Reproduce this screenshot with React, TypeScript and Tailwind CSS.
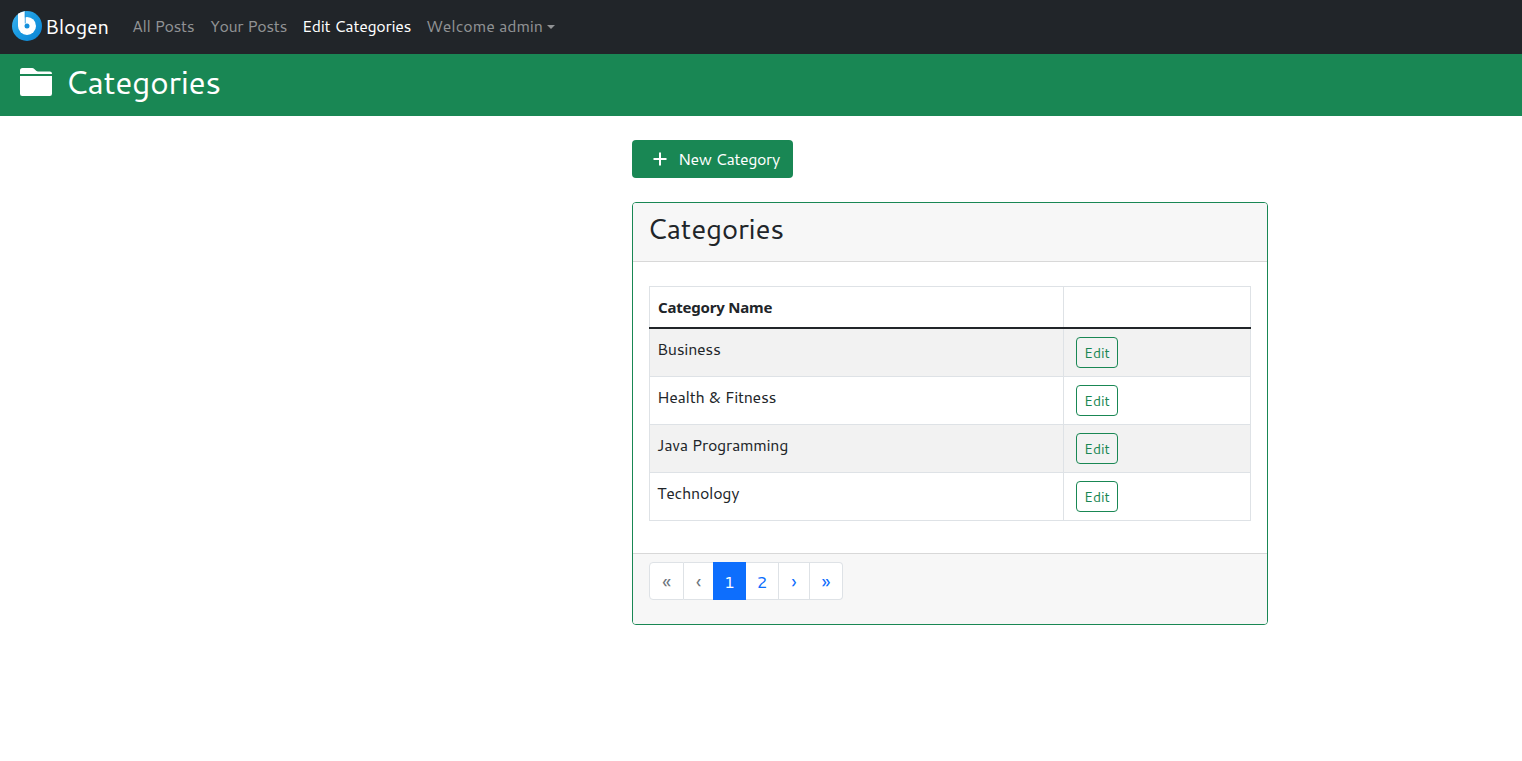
import React from "react";

const categories = ["Business", "Health & Fitness", "Java Programming", "Technology"];

function Logo() {
  return (
    <svg width="30" height="30" viewBox="0 0 30 30" className="-mt-px shrink-0">
      <defs>
        <linearGradient id="disc" x1="0" y1="0" x2="1" y2="1">
          <stop offset="0" stopColor="#45b5ee" />
          <stop offset="0.45" stopColor="#1a9be2" />
          <stop offset="1" stopColor="#0b83d3" />
        </linearGradient>
      </defs>
      <circle cx="15" cy="15" r="15" fill="url(#disc)" />
      <path fill="#fff" d="M6 2.8Q9 .7 12.8 .2V15H6Z" />
      <circle cx="15" cy="14.9" r="9" fill="#fff" />
      <path fill="#1490dc" d="M12.8 1H13.6V12.6H12.8Z" />
      <circle cx="15" cy="14.9" r="2.5" fill="#1490dc" />
    </svg>
  );
}

function FolderIcon() {
  return (
    <svg width="32" height="32" viewBox="0 0 32 32" fill="#fff" className="shrink-0">
      <path d="M0 8V4.5A2.5 2.5 0 0 1 2.5 2H12.2Q13.4 2 14.3 2.9L16.2 4.8Q17 5.5 18 5.5H29.8A2.2 2.2 0 0 1 32 7.7V8ZM0 10H32V27.8A2.2 2.2 0 0 1 29.8 30H2.2A2.2 2.2 0 0 1 0 27.8Z" />
    </svg>
  );
}

function Navbar() {
  return (
    <nav className="flex h-[54px] items-center bg-[#212529] pb-0.5 pl-3 text-base leading-6 tracking-[-0.3px] text-[#909294]">
      <a className="flex items-center">
        <Logo />
        <span className="ml-[3px] w-[87px] text-xl leading-[30px] tracking-[-0.2px] text-white">Blogen</span>
      </a>
      <a className="w-[78px] tracking-[-0.4px]">All Posts</a>
      <a className="w-[92px] tracking-[-0.4px]">Your Posts</a>
      <a className="w-[124px] text-white">Edit Categories</a>
      <a className="flex items-center">
        <span className="w-[121px] tracking-[-0.1px]">Welcome admin</span>
        <span className="mt-px border-x-[4.8px] border-t-[4.8px] border-x-transparent border-t-[#909294]" />
      </a>
    </nav>
  );
}

function Pagination() {
  const cell = "flex h-[38px] items-center justify-center pb-px";
  const base = cell + " border-y border-r border-[#dee2e6] bg-white";
  return (
    <div className="flex text-base leading-6 text-[#0d6efd]">
      <span className={base + " w-[35px] rounded-l border-l text-xl text-[#6c757d]"}>«</span>
      <span className={cell + " w-[29px] border-y border-[#dee2e6] bg-white text-xl text-[#6c757d]"}>‹</span>
      <span className={cell + " w-[33px] bg-[#0d6efd] text-[17px] text-white"}>1</span>
      <span className={base + " w-[33px] text-[17px]"}>2</span>
      <span className={base + " w-[31px] text-xl"}>›</span>
      <span className={base + " w-[33px] rounded-r text-xl"}>»</span>
    </div>
  );
}

export default function App() {
  return (
    <div className="min-h-[761px] bg-white font-['Cantarell','Noto_Sans',sans-serif] whitespace-nowrap text-[#212529]">
      <Navbar />
      <header className="flex h-[62px] items-start bg-[#198754] pl-5 pt-3 text-white">
        <FolderIcon />
        <h1 className="ml-[13px] text-[32px] leading-[31px] tracking-[-0.4px]">Categories</h1>
      </header>

      <main className="ml-[632px] w-[636px] pt-6">
        <button className="flex h-[38px] w-[161px] items-center rounded bg-[#198754] pl-[21px] text-base leading-6 tracking-[-0.4px] text-white">
          <svg width="14" height="14" viewBox="0 0 14 14" className="shrink-0">
            <path d="M7 .5V13.5M.5 7H13.5" stroke="#fff" strokeWidth="2" />
          </svg>
          <span className="-mt-px ml-[11px]">New Category</span>
        </button>

        <section className="mt-6 rounded border border-[#198754]">
          <div className="h-[59px] rounded-t-[3px] border-b border-[#d8d8d8] bg-[#f7f7f7] pl-3.5 pt-2">
            <h2 className="text-[28px] leading-[34px] tracking-[-0.3px]">Categories</h2>
          </div>
          <div className="px-4 pt-6 pb-8">
            <table className="w-[602px] table-fixed border-separate border-spacing-0 text-left text-base leading-6 tracking-[-0.3px]">
              <thead>
                <tr className="h-[41px]">
                  <th className="w-[415px] border-x border-t border-[#dee2e6] px-2 pt-0 pb-px font-['Noto_Sans',sans-serif] text-[15px] font-bold tracking-[-0.2px]">
                    Category Name
                  </th>
                  <th className="w-[187px] border-t border-r border-[#dee2e6] p-0" />
                </tr>
                <tr className="h-0.5">
                  <td colSpan={2} className="h-0.5 bg-[#212529] p-0" />
                </tr>
              </thead>
              <tbody>
                {categories.map((name) => (
                  <tr key={name} className="h-12 odd:bg-[#f2f2f2]">
                    <td className="border-x border-b border-[#dee2e6] pt-2 pb-0 pl-[7px] align-top">{name}</td>
                    <td className="border-r border-b border-[#dee2e6] py-2 pl-3 align-top">
                      <button className="flex h-[31px] w-[42px] items-center justify-center rounded border border-[#198754] text-sm tracking-normal text-[#198754]">
                        Edit
                      </button>
                    </td>
                  </tr>
                ))}
              </tbody>
            </table>
          </div>
          <div className="h-[71px] rounded-b-[3px] border-t border-[#d8d8d8] bg-[#f7f7f7] px-4 pt-2">
            <Pagination />
          </div>
        </section>
      </main>
    </div>
  );
}
